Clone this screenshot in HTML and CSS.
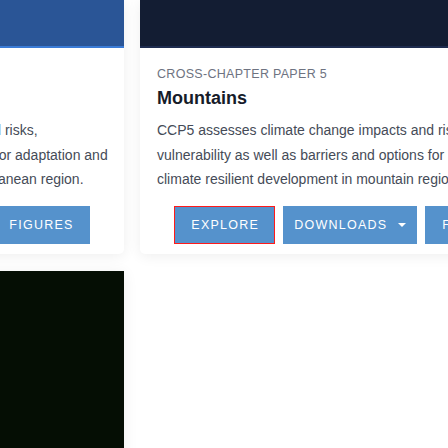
FILE: index.html
```html
<!DOCTYPE html>
<html lang="en">
<head>
<meta charset="utf-8">
<title>Cross-Chapter Papers</title>
<link rel="stylesheet" href="styles.css">
</head>
<body>
<main class="grid">
  <article class="card">
    <div class="card-media media-blue"></div>
    <div class="card-body">
      <p class="eyebrow">CROSS-CHAPTER PAPER 4</p>
      <h2 class="card-title">Mediterranean</h2>
      <p class="card-text">CCP4 assesses climate change impacts and risks, vulnerability as well as barriers and options for adaptation and climate resilient development in the Mediterranean region.</p>
      <div class="actions">
        <a class="btn">EXPLORE</a>
        <a class="btn btn-drop">DOWNLOADS <svg class="caret" width="8" height="4" viewBox="0 0 8 4"><path d="M0 0H8L4 4Z" fill="#fff"/></svg></a>
        <a class="btn">FIGURES</a>
      </div>
    </div>
  </article>
  <article class="card">
    <div class="card-media media-navy"></div>
    <div class="card-body">
      <p class="eyebrow">CROSS-CHAPTER PAPER 5</p>
      <h2 class="card-title">Mountains</h2>
      <p class="card-text">CCP5 assesses climate change impacts and risks, vulnerability as well as barriers and options for adaptation and climate resilient development in mountain regions.</p>
      <div class="actions">
        <a class="btn btn-focus">EXPLORE</a>
        <a class="btn btn-drop">DOWNLOADS <svg class="caret" width="8" height="4" viewBox="0 0 8 4"><path d="M0 0H8L4 4Z" fill="#fff"/></svg></a>
        <a class="btn">FIGURES</a>
      </div>
    </div>
  </article>
  <article class="card card-image">
    <div class="media-black"></div>
  </article>
</main>
</body>
</html>
```
FILE: styles.css
```css
html, body {
  margin: 0;
  padding: 0;
  background: #ffffff;
  overflow: hidden;
  height: 448px;
}
body {
  font-family: "Liberation Sans", Arial, sans-serif;
}
.grid {
  display: grid;
  grid-template-columns: 417px 417px;
  row-gap: 17px;
  column-gap: 16px;
  margin-left: -293px;
}
.card {
  background: #ffffff;
  border-radius: 0 0 5px 5px;
  box-shadow: 0 2px 14px rgba(0, 0, 0, 0.07);
  overflow: hidden;
}
.card-media {
  height: 46px;
  border-bottom: 2px solid;
}
.media-blue {
  background: #2a5596;
  border-bottom-color: #3a7bd6;
}
.media-navy {
  background: #131d33;
  border-bottom-color: #1e2c4f;
}
.card-body {
  padding: 18px 16px 10px 17px;
}
.eyebrow {
  margin: 0;
  font-size: 12.5px;
  line-height: 16px;
  letter-spacing: 0.3px;
  color: #6e7381;
}
.card-title {
  margin: 4px 0 0;
  font-size: 18px;
  line-height: 24px;
  font-weight: 700;
  color: #161b29;
}
.card-text {
  margin: 8px -4px 0 0;
  font-size: 14px;
  line-height: 24.5px;
  color: #454b57;
}
.actions {
  display: flex;
  justify-content: center;
  gap: 8px;
  margin: 14px -16px 0 -17px;
}
.btn {
  display: flex;
  align-items: center;
  gap: 11px;
  height: 38px;
  padding: 0 16px 0 17px;
  background: #5592cc;
  color: #ffffff;
  font-size: 12.5px;
  letter-spacing: 1.25px;
  white-space: nowrap;
  box-sizing: border-box;
}
.btn-drop {
  padding: 0 11px;
}
.btn-focus {
  outline: 1px solid #ff1a1a;
  outline-offset: -1px;
}
.caret {
  display: block;
}
.card-image {
  border-radius: 0;
}
.media-black {
  height: 200px;
  background: #050e04;
}
```
